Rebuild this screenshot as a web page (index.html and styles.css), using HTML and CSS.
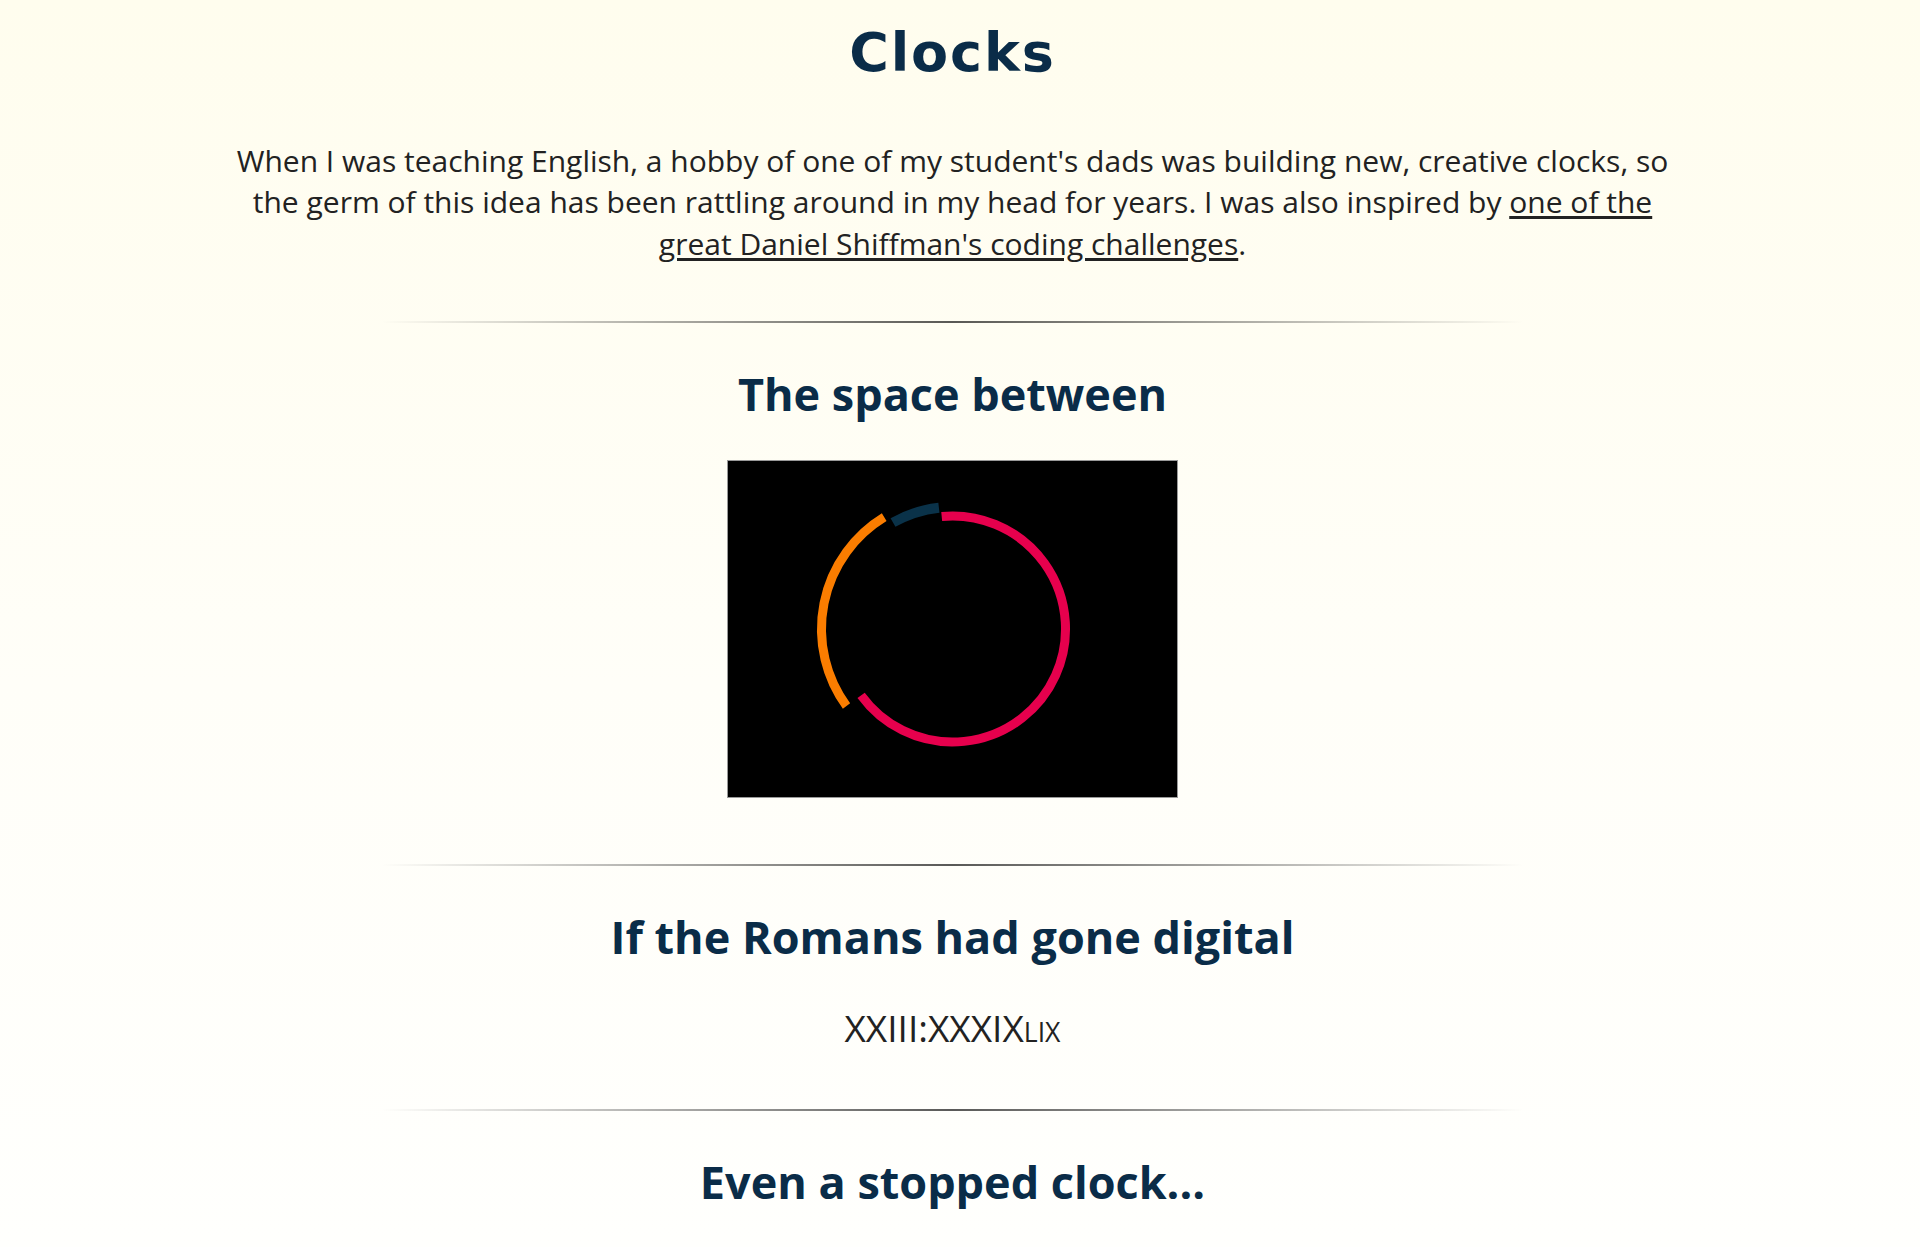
FILE: index.html
```html
<!DOCTYPE html>
<html lang="en">
<head>
<meta charset="utf-8">
<title>Clocks</title>
<link rel="stylesheet" href="styles.css">
</head>
<body>
<main class="page">
  <header class="intro">
    <h1 class="title">Clocks</h1>
    <p class="lede">When I was teaching English, a hobby of one of my student's dads was building new, creative clocks, so the germ of this idea has been rattling around in my head for years. I was also inspired by <a href="#">one of the great Daniel Shiffman's coding challenges</a>.</p>
  </header>

  <hr class="divider">

  <section class="clock">
    <h2 class="clock-title">The space between</h2>
    <div class="canvas">
      <svg width="449" height="336" viewBox="0 0 449 336">
        <path d="M213.7 55.5 A113 113 0 1 1 133.1 234.4" fill="none" stroke="#e6004d" stroke-width="9"/>
        <path d="M118.5 245 A131 131 0 0 1 156.2 56.2" fill="none" stroke="#fb7d00" stroke-width="9"/>
        <path d="M165 61.5 A122 122 0 0 1 210.9 46.8" fill="none" stroke="#0a3249" stroke-width="10"/>
      </svg>
    </div>
  </section>

  <hr class="divider">

  <section class="clock">
    <h2 class="clock-title">If the Romans had gone digital</h2>
    <p class="roman">XXIII:XXXIX<span class="roman-sec">LIX</span></p>
  </section>

  <hr class="divider">

  <section class="clock">
    <h2 class="clock-title">Even a stopped clock...</h2>
  </section>
</main>
</body>
</html>
```

FILE: styles.css
```css
html {
  height: 100%;
  overflow: hidden;
  background: linear-gradient(to bottom, #fffdee 0%, #fffef8 55%, #fffffd 100%);
}

body {
  margin: 0 15px 0 0;
  font-family: "Open Sans", "Liberation Sans", sans-serif;
  color: #222;
}

.page {
  display: flex;
  flex-direction: column;
  align-items: center;
}

.intro {
  display: flex;
  flex-direction: column;
  align-items: center;
}

.title {
  margin: 21px 0 0;
  font-family: "DejaVu Sans", "Inter", sans-serif;
  font-weight: 700;
  font-size: 54px;
  line-height: 1.2;
  letter-spacing: 0.035em;
  color: #0a2c48;
}

.lede {
  margin: 54px 0 0;
  max-width: 1450px;
  font-size: 30px;
  line-height: 41.6px;
  text-align: center;
}

.lede a {
  color: inherit;
  text-decoration: underline;
  text-underline-offset: 3px;
}

.divider {
  width: 60%;
  height: 2px;
  margin: 56.5px 0 0;
  border: 0;
  background: linear-gradient(to right, rgba(0, 0, 0, 0), rgba(0, 0, 0, 0.65), rgba(0, 0, 0, 0));
}

.clock {
  display: flex;
  flex-direction: column;
  align-items: center;
}

.clock + .divider {
  margin-top: 66px;
}

.clock-title {
  margin: 44px 0 0;
  font-size: 45px;
  font-weight: 700;
  line-height: 1.2;
  color: #0a2c48;
}

.canvas {
  margin-top: 39px;
  border: 1px solid #999;
  background: #000;
  line-height: 0;
}

.canvas svg {
  display: block;
}

.roman {
  margin: 34px 0 -14px;
  font-size: 37px;
  line-height: 1.6;
  color: #222;
}

.roman-sec {
  font-size: 0.72em;
}
```
